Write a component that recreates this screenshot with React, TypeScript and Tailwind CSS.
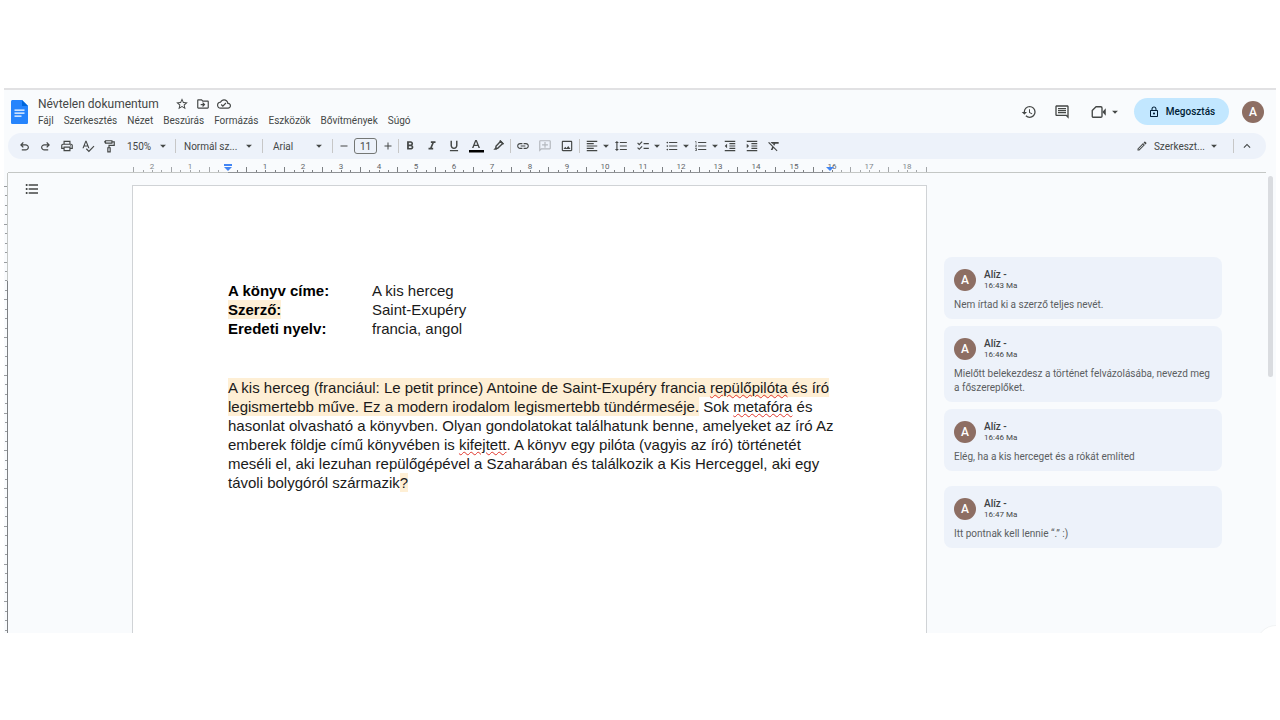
import type { ReactNode } from "react";
import {
  MdArrowDropDown, MdAdd, MdRemove, MdChecklist, MdExpandLess, MdFormatAlignLeft, MdFormatBold, MdFormatClear,
  MdFormatIndentDecrease, MdFormatIndentIncrease, MdFormatItalic, MdFormatLineSpacing, MdFormatListBulleted,
  MdFormatListNumbered, MdFormatUnderlined, MdHistory, MdLink, MdOutlineAddComment, MdOutlineCloudDone,
  MdOutlineDriveFileMove, MdOutlineEdit, MdOutlineImage, MdOutlineInsertComment, MdOutlineLock, MdOutlinePrint,
  MdSpellcheck, MdStarBorder,
} from "react-icons/md";

const CM = 37.75;

function DocsLogo() {
  return (
    <svg viewBox="0 0 17 24" className="h-6 w-[17px]" aria-hidden="true">
      <path d="M1.6 0H11l6 6v16.4c0 .9-.7 1.6-1.6 1.6H1.6C.7 24 0 23.3 0 22.400V1.600C0 .7.7 0 1.600 0z" fill="#2684fc" />
      <path d="M11 0l6 6h-6z" fill="#0066da" />
      <path d="M3.500 9.500h10v1.300h-10zM3.500 12.500h10v1.300h-10zM3.500 15.500h7v1.300h-7z" fill="#fff" />
    </svg>
  );
}

function CurvedArrow({ forward }: { forward?: boolean }) {
  return (
    <svg viewBox="0 0 24 24" className={forward ? "size-[13px] -scale-x-100" : "size-[13px]"} fill="currentColor" aria-hidden="true">
      <path d="M7 19.200v-2.200h7.100q1.575 0 2.738-1T18 13.500 16.838 11 14.100 10.200H8.100l2.500 2.500L9 14.200 3.800 9 9 3.800l1.600 1.500L8.100 7.900h6q2.525 0 4.263 1.625T20.200 13.500t-1.838 4.025T14.100 19.200z" />
    </svg>
  );
}

function PaintRoller() {
  return (
    <svg viewBox="0 0 24 24" className="size-3.5" fill="none" stroke="currentColor" strokeWidth="2" aria-hidden="true">
      <path d="M6 3h11v4H6zM17 5h4v6h-9v4M10 15h4v7h-4zM6 5H3.500" />
    </svg>
  );
}

function Highlighter() {
  return (
    <svg viewBox="0 0 24 24" className="size-3.5" aria-hidden="true">
      <path d="M8.500 12.500L16.500 4l3.500 3.500-8.500 8.500h-3z" fill="none" stroke="currentColor" strokeWidth="2.400" />
      <path d="M14 3.500l2-2 6.500 6.500-2 2zM4 18.500l4-4.500 3 3-1.500 1.500z" fill="currentColor" />
    </svg>
  );
}

function MeetCamera() {
  return (
    <svg viewBox="0 0 24 24" className="size-[18px]" fill="none" stroke="currentColor" strokeWidth="1.800" aria-hidden="true">
      <path d="M8 5h6.500a1.500 1.500 0 0 1 1.500 1.500v11a1.500 1.500 0 0 1-1.500 1.500H4.500A1.500 1.500 0 0 1 3 17.500V10z" strokeLinejoin="round" />
      <path d="M16.500 12l4.500-5v10z" fill="currentColor" stroke="none" />
    </svg>
  );
}

function Tool({ label, children, wide, narrow, muted }: { label: string; children: ReactNode; wide?: boolean; narrow?: boolean; muted?: boolean }) {
  const box = wide ? "w-[29px] pl-1" : narrow ? "w-[21px] justify-center" : "w-[22px] justify-center";
  return (
    <button
      type="button"
      aria-label={label}
      className={`flex h-5 shrink-0 items-center ${box} ${muted ? "text-[#b4b8be]" : "text-[#444746]"}`}
    >
      {children}
      {wide && <MdArrowDropDown className="size-3.5 shrink-0" />}
    </button>
  );
}

function Divider() {
  return <span className="h-3.5 w-px shrink-0 bg-[#c7c7c7]" />;
}

function HorizontalRuler() {
  const ticks: ReactNode[] = [];
  for (let i = -10; i <= 74; i++) {
    if (i === 0) continue;
    const x = Math.round(95.5 + (i * CM) / 4);
    const half = Math.abs(i % 4) === 2;
    const cm = Math.abs(i / 4);
    const outside = i < 0 || i > 64;
    ticks.push(
      <g key={i}>
        <rect x={x} y={half ? 7 : 10} width="1" height={half ? 5 : 2} fill={outside ? "#a4a7aa" : "#7d8083"} />
        {i % 4 === 0 && (
          <text x={x} y="9" textAnchor="middle" fontSize="8" fill={outside ? "#80868b" : "#5f6368"}>{cm}</text>
        )}
      </g>,
    );
  }
  return (
    <svg className="h-3 w-[795px] shrink-0 overflow-visible" viewBox="0 0 795 12" role="img" aria-label="Vonalzó">
      {ticks}
      <rect x="96" y="12" width="602" height="1" fill="#8f9295" />
      <path d="M92 4h8v2h-8zM92 7h8l-4 4z" fill="#4285f4" />
      <path d="M694 7h8l-4 4z" fill="#4285f4" />
    </svg>
  );
}

function VerticalRuler() {
  const marks = Array.from({ length: 48 }, (_, i) => i);
  return (
    <svg className="h-[460px] w-1 shrink-0" viewBox="0 0 4 460" role="img" aria-label="Függőleges vonalzó">
      {marks.map((i) => (
        <rect key={i} x={i % 4 === 0 ? 0 : 1} y={Math.round(13 + (i * CM) / 4)} width="4" height="1" fill="#9a9da0" />
      ))}
      <rect x="3" y="0" width="1" height="108" fill="#c4c7c5" />
      <rect x="3" y="108" width="1" height="352" fill="#7d8083" />
    </svg>
  );
}

function Avatar() {
  return (
    <span className="flex size-[22px] shrink-0 items-center justify-center rounded-full bg-[#8d6e63] text-xs font-medium text-white">A</span>
  );
}

function Comment({ time, children, className = "" }: { time: string; children: ReactNode; className?: string }) {
  return (
    <article className={`rounded-lg bg-[#edf2fa] px-2.5 pt-3 pb-[7px] ${className}`}>
      <header className="flex items-center gap-2">
        <Avatar />
        <div>
          <h2 className="text-[10px] leading-3 font-medium text-[#3c4043]">Alíz -</h2>
          <p className="text-[8px] leading-[10px] text-[#444746]">{time} Ma</p>
        </div>
      </header>
      <p className="mt-[7px] text-[10px] leading-[14px] text-[#5b5e61]">{children}</p>
    </article>
  );
}

function Misspelled({ children }: { children: ReactNode }) {
  return <span className="underline decoration-[#e0352b] decoration-wavy decoration-1 underline-offset-1">{children}</span>;
}

function Marked({ children }: { children: ReactNode }) {
  return <mark className="bg-[#feefd5] py-px text-inherit">{children}</mark>;
}

const menus = ["Fájl", "Szerkesztés", "Nézet", "Beszúrás", "Formázás", "Eszközök", "Bővítmények", "Súgó"];

export default function App() {
  return (
    <div className="min-h-screen bg-white px-1 pt-[88px] font-[Roboto,'Open_Sans',sans-serif] text-[#444746]">
      <div className="relative overflow-hidden border-t-2 border-[#e1e1e3] bg-[#f9fbfd]">
        <header className="flex h-[43px] items-center pr-3 pl-[7px]">
          <DocsLogo />
          <div className="ml-2.5 flex flex-col gap-px pt-0.5">
            <div className="flex items-center">
              <h1 className="text-xs leading-4">Névtelen dokumentum</h1>
              <div className="ml-4 flex gap-[7px]">
                <button type="button" aria-label="Csillag"><MdStarBorder className="size-3.5" /></button>
                <button type="button" aria-label="Áthelyezés"><MdOutlineDriveFileMove className="size-3.5" /></button>
                <button type="button" aria-label="Mentve"><MdOutlineCloudDone className="size-3.5" /></button>
              </div>
            </div>
            <nav className="flex gap-2.5 text-[10px] leading-4">
              {menus.map((m) => <button type="button" key={m}>{m}</button>)}
            </nav>
          </div>
          <div className="ml-auto flex items-center">
            <button type="button" aria-label="Előzmények"><MdHistory className="size-4" /></button>
            <button type="button" aria-label="Megjegyzések" className="ml-[17px]"><MdOutlineInsertComment className="size-4" /></button>
            <button type="button" aria-label="Videohívás" className="ml-5 flex items-center">
              <MeetCamera />
              <MdArrowDropDown className="size-3.5" />
            </button>
            <button type="button" className="ml-3 flex h-[27px] w-[95px] items-center justify-center gap-1.5 rounded-full bg-[#c2e7ff] text-[10px] font-medium text-[#001d35]">
              <MdOutlineLock className="size-3" />
              Megosztás
            </button>
            <button type="button" aria-label="Fiók" className="ml-[13px]"><Avatar /></button>
          </div>
        </header>

        <div role="toolbar" className="mr-2.5 ml-1 flex h-[26px] items-center rounded-full bg-[#edf2fa] pr-3 pl-1.5 text-[10px]">
          <Tool label="Visszavonás" narrow><CurvedArrow /></Tool>
          <Tool label="Mégis" narrow><CurvedArrow forward /></Tool>
          <Tool label="Nyomtatás" narrow><MdOutlinePrint className="size-3.5" /></Tool>
          <Tool label="Helyesírás" narrow><MdSpellcheck className="size-3.5" /></Tool>
          <Tool label="Formátummásoló" narrow><PaintRoller /></Tool>
          <button type="button" className="mr-[5px] ml-2 flex w-[43px] items-center justify-between">150%<MdArrowDropDown className="size-3.5" /></button>
          <Divider />
          <button type="button" className="mr-1.5 ml-2 flex w-[72px] items-center justify-between">Normál sz...<MdArrowDropDown className="size-3.5" /></button>
          <Divider />
          <button type="button" className="mr-1.5 ml-2.5 flex w-[53px] items-center justify-between">Arial<MdArrowDropDown className="size-3.5" /></button>
          <Divider />
          <Tool label="Kisebb betűméret" narrow><MdRemove className="size-3" /></Tool>
          <input aria-label="Betűméret" defaultValue="11" className="h-4 w-[23px] shrink-0 rounded-[3px] border border-[#747775] bg-transparent text-center" />
          <Tool label="Nagyobb betűméret" narrow><MdAdd className="size-3" /></Tool>
          <Divider />
          <Tool label="Félkövér"><MdFormatBold className="size-3.5" /></Tool>
          <Tool label="Dőlt"><MdFormatItalic className="size-3.5" /></Tool>
          <Tool label="Aláhúzott"><MdFormatUnderlined className="size-3.5" /></Tool>
          <Tool label="Szövegszín">
            <svg viewBox="0 0 16 14" className="h-3.5 w-4" aria-hidden="true">
              <path d="M7.200 1h1.600l3.200 8h-1.500l-.7-2H6.200l-.7 2H4zM6.700 5.800h2.600L8 2.400z" fill="currentColor" />
              <path d="M1 11h15v2.500H1z" fill="#000" />
            </svg>
          </Tool>
          <Tool label="Kiemelés"><Highlighter /></Tool>
          <div className="flex items-center gap-px px-px">
            <Divider />
            <div className="flex">
              <Tool label="Link"><MdLink className="size-3.5" /></Tool>
              <Tool label="Megjegyzés hozzáadása" muted><MdOutlineAddComment className="size-3.5 -scale-x-100" /></Tool>
              <Tool label="Kép"><MdOutlineImage className="size-3.5" /></Tool>
            </div>
            <Divider />
          </div>
          <Tool label="Igazítás" wide><MdFormatAlignLeft className="size-3.5 shrink-0" /></Tool>
          <Tool label="Sorköz"><MdFormatLineSpacing className="size-3.5" /></Tool>
          <Tool label="Ellenőrzőlista" wide><MdChecklist className="size-3.5 shrink-0" /></Tool>
          <Tool label="Felsorolás" wide><MdFormatListBulleted className="size-3.5 shrink-0" /></Tool>
          <Tool label="Számozott lista" wide><MdFormatListNumbered className="size-3.5 shrink-0" /></Tool>
          <Tool label="Behúzás csökkentése"><MdFormatIndentDecrease className="size-3.5" /></Tool>
          <Tool label="Behúzás növelése"><MdFormatIndentIncrease className="size-3.5" /></Tool>
          <Tool label="Formázás törlése"><MdFormatClear className="size-3.5" /></Tool>
          <button type="button" className="mr-3 ml-auto flex items-center">
            <MdOutlineEdit className="mr-1.5 size-3" />
            Szerkeszt...
            <MdArrowDropDown className="ml-0.5 size-3.5" />
          </button>
          <Divider />
          <button type="button" aria-label="Menük elrejtése" className="ml-1.5"><MdExpandLess className="size-3.5" /></button>
        </div>

        <div className="mr-2.5 ml-1 flex h-3.5 items-end border-b border-[#c4c7c5] pl-[124px]">
          <HorizontalRuler />
        </div>

        <div className="flex h-[460px] items-start overflow-hidden">
          <VerticalRuler />
          <div className="w-[124px] shrink-0 pt-2 pl-4">
            <button type="button" aria-label="Vázlat" className="block"><MdFormatListBulleted className="size-4" /></button>
          </div>
          <main className="mt-3 h-[450px] w-[795px] shrink-0 border border-[#d0d3d6] bg-white px-[95px] pt-[95px] font-['Liberation_Sans',Arial,sans-serif] text-[15px] leading-[19px] text-[#1a1a1a]">
            <dl className="grid grid-cols-[144px_1fr]">
              <dt className="font-bold text-black">A könyv címe:</dt><dd>A kis herceg</dd>
              <dt className="font-bold text-black"><Marked>Szerző:</Marked></dt><dd>Saint-Exupéry</dd>
              <dt className="font-bold text-black">Eredeti nyelv:</dt><dd>francia, angol</dd>
            </dl>
            <p className="mt-10 whitespace-nowrap">
              <Marked>
                A kis herceg (franciául: Le petit prince) Antoine de Saint-Exupéry francia <Misspelled>repülőpilóta</Misspelled> és író<br />
                legismertebb műve. Ez a modern irodalom legismertebb tündérmeséje.
              </Marked>{" "}
              Sok <Misspelled>metafóra</Misspelled> és<br />
              hasonlat olvasható a könyvben. Olyan gondolatokat találhatunk benne, amelyeket az író Az<br />
              emberek földje című könyvében is <Misspelled>kifejtett</Misspelled>. A könyv egy pilóta (vagyis az író) történetét<br />
              meséli el, aki lezuhan repülőgépével a Szaharában és találkozik a Kis Herceggel, aki egy<br />
              távoli bolygóról származik<Marked>?</Marked>
            </p>
          </main>
          <aside className="mt-[84px] ml-[17px] flex w-[278px] shrink-0 flex-col gap-[7px]">
            <Comment time="16:43">Nem írtad ki a szerző teljes nevét.</Comment>
            <Comment time="16:46">Mielőtt belekezdesz a történet felvázolásába, nevezd meg a főszereplőket.</Comment>
            <Comment time="16:46">Elég, ha a kis herceget és a rókát említed</Comment>
            <Comment time="16:47" className="mt-2">Itt pontnak kell lennie “.” :)</Comment>
          </aside>
          <div className="mt-[3px] mr-[3px] ml-auto h-[201px] w-[5px] rounded-full bg-[#dadce0]" />
        </div>
        <span className="absolute -right-5 -bottom-8 size-10 rounded-full border border-[#f1f3f4] bg-white" />
      </div>
    </div>
  );
}
